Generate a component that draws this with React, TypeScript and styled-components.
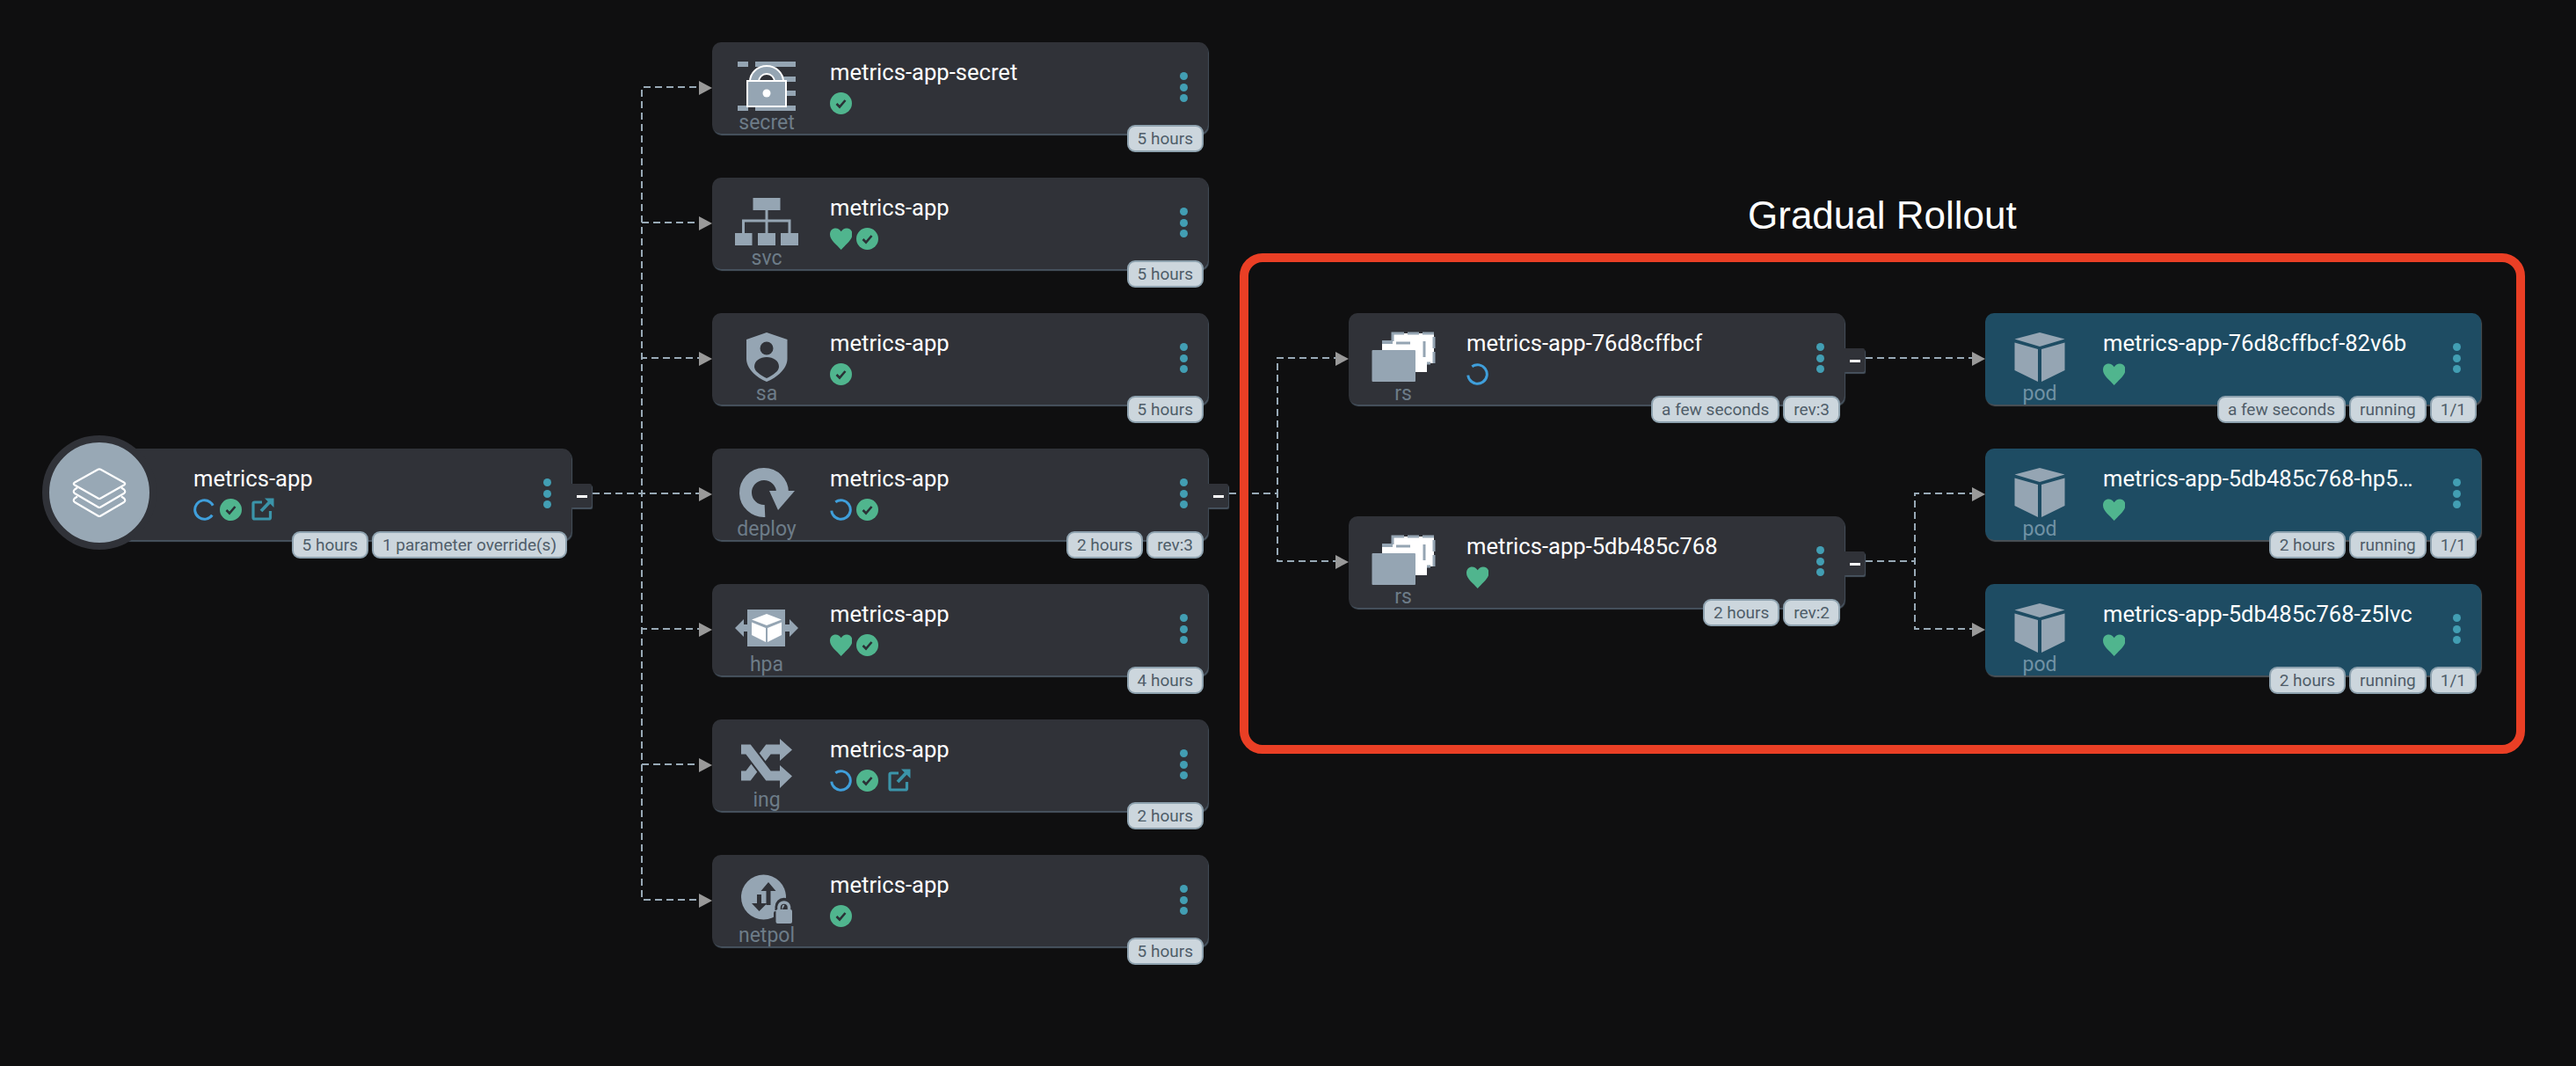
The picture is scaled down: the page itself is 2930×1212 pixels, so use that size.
import React from 'react';
import styled, { createGlobalStyle } from 'styled-components';

const GRAY = '#95a5b3';
const CARD = '#303238';
const POD = '#1e4c63';
const GREEN = '#50b58e';

type Kind = 'app' | 'secret' | 'svc' | 'sa' | 'deploy' | 'hpa' | 'ing' | 'netpol' | 'rs' | 'pod';
type Status = 'check' | 'heart' | 'link' | number;

interface NodeData {
  kind: Kind;
  name: string;
  x: number;
  y: number;
  status: Status[];
  tags: string[];
  handle?: boolean;
}

const CARD_H = 104;

const nodes: NodeData[] = [
  { kind: 'app', name: 'metrics-app', x: 86, y: 510, status: [0, 'check', 'link'], tags: ['5 hours', '1 parameter override(s)'], handle: true },
  { kind: 'secret', name: 'metrics-app-secret', x: 810, y: 48, status: ['check'], tags: ['5 hours'] },
  { kind: 'svc', name: 'metrics-app', x: 810, y: 202, status: ['heart', 'check'], tags: ['5 hours'] },
  { kind: 'sa', name: 'metrics-app', x: 810, y: 356, status: ['check'], tags: ['5 hours'] },
  { kind: 'deploy', name: 'metrics-app', x: 810, y: 510, status: [200, 'check'], tags: ['2 hours', 'rev:3'], handle: true },
  { kind: 'hpa', name: 'metrics-app', x: 810, y: 664, status: ['heart', 'check'], tags: ['4 hours'] },
  { kind: 'ing', name: 'metrics-app', x: 810, y: 818, status: [200, 'check', 'link'], tags: ['2 hours'] },
  { kind: 'netpol', name: 'metrics-app', x: 810, y: 972, status: ['check'], tags: ['5 hours'] },
  { kind: 'rs', name: 'metrics-app-76d8cffbcf', x: 1534, y: 356, status: [200], tags: ['a few seconds', 'rev:3'], handle: true },
  { kind: 'rs', name: 'metrics-app-5db485c768', x: 1534, y: 587, status: ['heart'], tags: ['2 hours', 'rev:2'], handle: true },
  { kind: 'pod', name: 'metrics-app-76d8cffbcf-82v6b', x: 2258, y: 356, status: ['heart'], tags: ['a few seconds', 'running', '1/1'] },
  { kind: 'pod', name: 'metrics-app-5db485c768-hp5wm', x: 2258, y: 510, status: ['heart'], tags: ['2 hours', 'running', '1/1'] },
  { kind: 'pod', name: 'metrics-app-5db485c768-z5lvc', x: 2258, y: 664, status: ['heart'], tags: ['2 hours', 'running', '1/1'] },
];

const edges: string[] = [
  ...[99, 253, 407, 561, 715, 869, 1023].map((y) => `M674 561H730V${y}H796`),
  'M1398 561H1453V407H1520',
  'M1398 561H1453V638H1520',
  'M2122 407H2244',
  'M2122 638H2178V561H2244',
  'M2122 638H2178V715H2244',
];

const arrows: [number, number][] = [
  ...[99, 253, 407, 561, 715, 869, 1023].map((y) => [810, y] as [number, number]),
  [1534, 407],
  [1534, 638],
  [2258, 407],
  [2258, 561],
  [2258, 715],
];

const GlobalStyle = createGlobalStyle`
  html, body {
    margin: 0;
    padding: 0;
    background: #0f0f10;
  }
`;

const Canvas = styled.div`
  position: relative;
  width: 2930px;
  height: 1212px;
  overflow: hidden;
  background: #0f0f10;
  font-family: Roboto, "Liberation Sans", sans-serif;
`;

const EdgeLayer = styled.svg`
  position: absolute;
  left: 0;
  top: 0;
`;

const Title = styled.div`
  position: absolute;
  left: 1988px;
  top: 219px;
  font-family: "Liberation Sans", Arial, sans-serif;
  font-size: 44px;
  line-height: 52px;
  color: #fff;
  white-space: nowrap;
`;

const Frame = styled.div`
  position: absolute;
  left: 1410px;
  top: 288px;
  width: 1462px;
  height: 569px;
  box-sizing: border-box;
  border: 10px solid #ea3f25;
  border-radius: 26px;
`;

const Card = styled.div<{ $x: number; $y: number; $pod: boolean }>`
  position: absolute;
  left: ${(p) => p.$x}px;
  top: ${(p) => p.$y}px;
  width: 564px;
  height: ${CARD_H}px;
  display: flex;
  border-radius: 10px;
  background: ${(p) => (p.$pod ? POD : CARD)};
  box-shadow: 1px 2px 1px ${(p) => (p.$pod ? '#4b5157' : '#47535f')};
`;

const IconCol = styled.div`
  width: 124px;
  flex: none;
  padding-top: 20px;
  display: flex;
  flex-direction: column;
  align-items: center;
`;

const KindLabel = styled.div<{ $pod: boolean }>`
  font-size: 23px;
  line-height: 24px;
  color: ${(p) => (p.$pod ? '#7192a5' : '#6d7c88')};
`;

const Body = styled.div`
  margin-left: 10px;
  width: 356px;
  padding-top: 18px;
`;

const Name = styled.div`
  font-size: 25.6px;
  line-height: 32px;
  color: #fff;
  white-space: nowrap;
  overflow: hidden;
  text-overflow: ellipsis;
`;

const StatusRow = styled.div`
  display: flex;
  align-items: center;
  gap: 5px;
  margin-top: 6px;
  height: 26px;
`;

const Menu = styled.div`
  position: absolute;
  right: 23px;
  top: 34px;
  display: flex;
  flex-direction: column;
  gap: 3.5px;
`;

const Dot = styled.span`
  width: 9px;
  height: 9px;
  border-radius: 50%;
  background: #429eb3;
`;

const Tags = styled.div`
  position: absolute;
  right: 5px;
  top: 94px;
  display: flex;
  gap: 4px;
`;

const Tag = styled.div`
  height: 31px;
  box-sizing: border-box;
  padding: 0 10px;
  border: 2px solid #8ea2af;
  border-radius: 9px;
  background: #ccd6dd;
  color: #4f5d69;
  font-size: 19px;
  line-height: 27px;
  white-space: nowrap;
`;

const Handle = styled.div`
  position: absolute;
  left: 100%;
  top: 40px;
  width: 23px;
  height: 27px;
  display: flex;
  align-items: center;
  justify-content: center;
  background: ${CARD};
  border-radius: 0 2px 2px 0;
  box-shadow: 1px 2px 1px #47535f;
`;

const Minus = styled.span`
  width: 12px;
  height: 3px;
  margin-top: 2px;
  background: #fff;
`;

const AppBadge = styled.div`
  position: absolute;
  left: -38px;
  top: -15px;
  width: 130px;
  height: 130px;
  box-sizing: border-box;
  border: 8px solid ${CARD};
  border-radius: 50%;
  background: #98a8b5;
  display: flex;
  align-items: center;
  justify-content: center;
`;

const KindSvg: React.FC<{ children: React.ReactNode }> = ({ children }) => (
  <svg width="72" height="60" viewBox="0 0 72 60" style={{ display: 'block', overflow: 'visible' }}>
    {children}
  </svg>
);

const SecretIcon = () => (
  <KindSvg>
    <g fill={GRAY}>
      <rect x="3" y="2" width="12" height="6" />
      <rect x="23" y="2" width="46" height="6" />
      <rect x="54" y="19" width="15" height="6" />
      <rect x="59" y="35" width="10" height="6" />
      <rect x="3" y="52" width="12" height="6" />
      <rect x="23" y="52" width="46" height="6" />
    </g>
    <path d="M17 25a19 18 0 0 1 38 0h-10a9 9 0 0 0-18 0z" fill={GRAY} stroke="#fff" strokeWidth="2" />
    <rect x="14" y="24" width="44" height="29" fill={GRAY} stroke="#fff" strokeWidth="2" />
    <circle cx="36" cy="38" r="4.5" fill="#fff" />
  </KindSvg>
);

const SvcIcon = () => (
  <KindSvg>
    <g fill={GRAY}>
      <rect x="20.5" y="3" width="31" height="14" />
      <rect x="0" y="43" width="19.5" height="14" />
      <rect x="26" y="43" width="20" height="14" />
      <rect x="52" y="43" width="20" height="14" />
    </g>
    <path d="M36 17V43M9.5 43V29H62V43" fill="none" stroke={GRAY} strokeWidth="3" />
  </KindSvg>
);

const SaIcon = () => (
  <KindSvg>
    <path d="M36 2L59.5 10V32C59.5 43 48 53 36 58C24 53 13 43 13 32V10Z" fill={GRAY} />
    <circle cx="36" cy="20" r="7.5" fill={CARD} />
    <path d="M36 30C43.500 30 50 34 50 41C50 46 43 50.500 36 54C29 50.500 22 46 22 41C22 34 28.500 30 36 30Z" fill={CARD} />
  </KindSvg>
);

const DeployIcon = () => (
  <KindSvg>
    <path d="M34 51A21 21 0 1 1 54 30" fill="none" stroke={GRAY} strokeWidth="14" />
    <path d="M39 28H68L49 50Z" fill={GRAY} />
  </KindSvg>
);

const HpaIcon = () => (
  <KindSvg>
    <rect x="14" y="9" width="43" height="42" fill={GRAY} />
    <path d="M0 30L10 20V26H14V34H10V40ZM72 30L62 20V26H57V34H62V40Z" fill={GRAY} />
    <path d="M36 14L53 20.500L36 27L19 20.500Z" fill="#fff" />
    <path d="M19 23.500L35 30V46L19 38ZM53 23.500L37 30V46L53 38Z" fill="#fff" />
  </KindSvg>
);

const IngIcon = () => (
  <KindSvg>
    <path d="M7 44H15L38 14H52" fill="none" stroke={GRAY} strokeWidth="11" />
    <path d="M7 14H15L38 44H52" fill="none" stroke={CARD} strokeWidth="15" />
    <path d="M7 14H15L38 44H52" fill="none" stroke={GRAY} strokeWidth="11" />
    <path d="M51 2L65 14.500L51 27ZM51 32L65 44.500L51 58Z" fill={GRAY} />
  </KindSvg>
);

const NetpolIcon = () => (
  <KindSvg>
    <circle cx="32.500" cy="28" r="25.500" fill={GRAY} />
    <path d="M38 11L46.500 21H40.500V37H35.500V21H29.500Z" fill={CARD} />
    <path d="M27.500 44L19 35H25V25H30V35H36.500Z" fill={CARD} />
    <path d="M46 44H65A2 2 0 0 1 67 46V58A2 2 0 0 1 65 60H46A2 2 0 0 1 44 58V46A2 2 0 0 1 46 44Z" fill={CARD} />
    <path d="M49.500 43V39A6.200 6.200 0 0 1 62 39V43" fill="none" stroke={CARD} strokeWidth="8" />
    <rect x="46.500" y="42" width="18.500" height="16" rx="2" fill={GRAY} />
    <path d="M50 43V39A5.800 5.800 0 0 1 61.500 39V43" fill="none" stroke={GRAY} strokeWidth="3.500" />
  </KindSvg>
);

const RsIcon = () => (
  <KindSvg>
    <rect x="24" y="3" width="47" height="34" fill="#fff" stroke={GRAY} strokeWidth="3" strokeDasharray="13 4" />
    <rect x="12" y="12" width="51" height="35" fill="#fff" />
    <path d="M12 13H24" stroke={GRAY} strokeWidth="4" />
    <path d="M28 14H44M60 12V30" stroke={GRAY} strokeWidth="3" />
    <rect x="0.500" y="22" width="49.500" height="36" rx="1" fill={GRAY} />
  </KindSvg>
);

const PodIcon = () => (
  <KindSvg>
    <path d="M36 2L64.500 9.500L36 18L7.500 9.500Z" fill={GRAY} />
    <path d="M7.500 13.500L34 21V58L7.500 45ZM64.500 13.500L38 21V58L64.500 45Z" fill={GRAY} />
  </KindSvg>
);

const kindIcons: Record<Exclude<Kind, 'app'>, React.FC> = {
  secret: SecretIcon,
  svc: SvcIcon,
  sa: SaIcon,
  deploy: DeployIcon,
  hpa: HpaIcon,
  ing: IngIcon,
  netpol: NetpolIcon,
  rs: RsIcon,
  pod: PodIcon,
};

const LayersIcon = () => (
  <svg width="70" height="70" viewBox="0 0 70 70">
    <g fill="none" stroke="#fff" strokeWidth="2.200" strokeLinejoin="round">
      <path d="M33.500 8.800Q35 8 36.500 8.800L63 23.500Q65.500 25 63 26.500L36.500 41.500Q35 42.300 33.500 41.500L7 26.500Q4.500 25 7 23.500Z" />
      <path d="M10 29.500L7 31.500Q4.500 34 7 36L33.500 51.500Q35 52.300 36.500 51.500L63 36Q65.500 34 63 31.500L60 29.500" />
      <path d="M10 39.500L7 41.500Q4.500 44 7 46L33.500 61.500Q35 62.300 36.500 61.500L63 46Q65.500 44 63 41.500L60 39.500" />
    </g>
  </svg>
);

const StatusIcon: React.FC<{ status: Status }> = ({ status }) => {
  if (status === 'check') {
    return (
      <svg width="25" height="25" viewBox="0 0 25 25">
        <circle cx="12.500" cy="12.500" r="12.500" fill={GREEN} />
        <path d="M7.500 13L11 16.500L17.500 9" fill="none" stroke="#2b3036" strokeWidth="2.600" />
      </svg>
    );
  }
  if (status === 'heart') {
    return (
      <svg width="25" height="25" viewBox="0 0 25 25">
        <path d="M12.700 25C8 19.500 0 14 0 7.500C0 3 3 0.500 6.500 0.500C9 0.500 11.300 2 12.700 4.200C14.200 2 16.300 0.500 19 0.500C22.500 0.500 25.500 3 25.500 7.500C25.500 14 17.500 19.500 12.700 25Z" fill={GREEN} />
      </svg>
    );
  }
  if (status === 'link') {
    return (
      <svg width="26" height="26" viewBox="0 0 26 26" style={{ marginLeft: 6 }}>
        <path d="M12 5H3.500A1.500 1.500 0 0 0 2 6.500V22.500A1.500 1.500 0 0 0 3.500 24H20A1.500 1.500 0 0 0 21.500 22.500V15" fill="none" stroke="#3b94a9" strokeWidth="3.200" />
        <path d="M11 15L21 4.500" stroke="#3b94a9" strokeWidth="3.800" />
        <path d="M15 0.500H25.500V11Z" fill="#3b94a9" />
      </svg>
    );
  }
  return (
    <svg width="25" height="25" viewBox="0 0 25 25">
      <circle
        cx="12.500"
        cy="12.500"
        r="10.800"
        fill="none"
        stroke="#3f9fdb"
        strokeWidth="3"
        strokeDasharray="56 12"
        transform={`rotate(${status - 325} 12.500 12.500)`}
      />
    </svg>
  );
};

const GraphNode: React.FC<{ node: NodeData }> = ({ node }) => {
  const pod = node.kind === 'pod';
  const KindIcon = node.kind === 'app' ? null : kindIcons[node.kind];
  return (
    <Card $x={node.x} $y={node.y} $pod={pod}>
      <IconCol>
        {KindIcon && <KindIcon />}
        {KindIcon && <KindLabel $pod={pod}>{node.kind}</KindLabel>}
      </IconCol>
      <Body>
        <Name>{node.name}</Name>
        <StatusRow>
          {node.status.map((s, i) => (
            <StatusIcon key={i} status={s} />
          ))}
        </StatusRow>
      </Body>
      <Menu>
        <Dot />
        <Dot />
        <Dot />
      </Menu>
      <Tags>
        {node.tags.map((t) => (
          <Tag key={t}>{t}</Tag>
        ))}
      </Tags>
      {node.handle && (
        <Handle>
          <Minus />
        </Handle>
      )}
      {node.kind === 'app' && (
        <AppBadge>
          <LayersIcon />
        </AppBadge>
      )}
    </Card>
  );
};

const App: React.FC = () => (
  <Canvas>
    <GlobalStyle />
    <EdgeLayer width="2930" height="1212">
      {edges.map((d) => (
        <path key={d} d={d} fill="none" stroke="#98a9b6" strokeWidth="2" strokeDasharray="8 5" />
      ))}
      {arrows.map(([x, y]) => (
        <polygon key={`${x}-${y}`} points={`${x},${y + 1} ${x - 15},${y - 7} ${x - 15},${y + 9}`} fill="#999" />
      ))}
    </EdgeLayer>
    <Title>Gradual Rollout</Title>
    <Frame />
    {nodes.map((n) => (
      <GraphNode key={`${n.name}-${n.y}-${n.x}`} node={n} />
    ))}
  </Canvas>
);

export default App;
